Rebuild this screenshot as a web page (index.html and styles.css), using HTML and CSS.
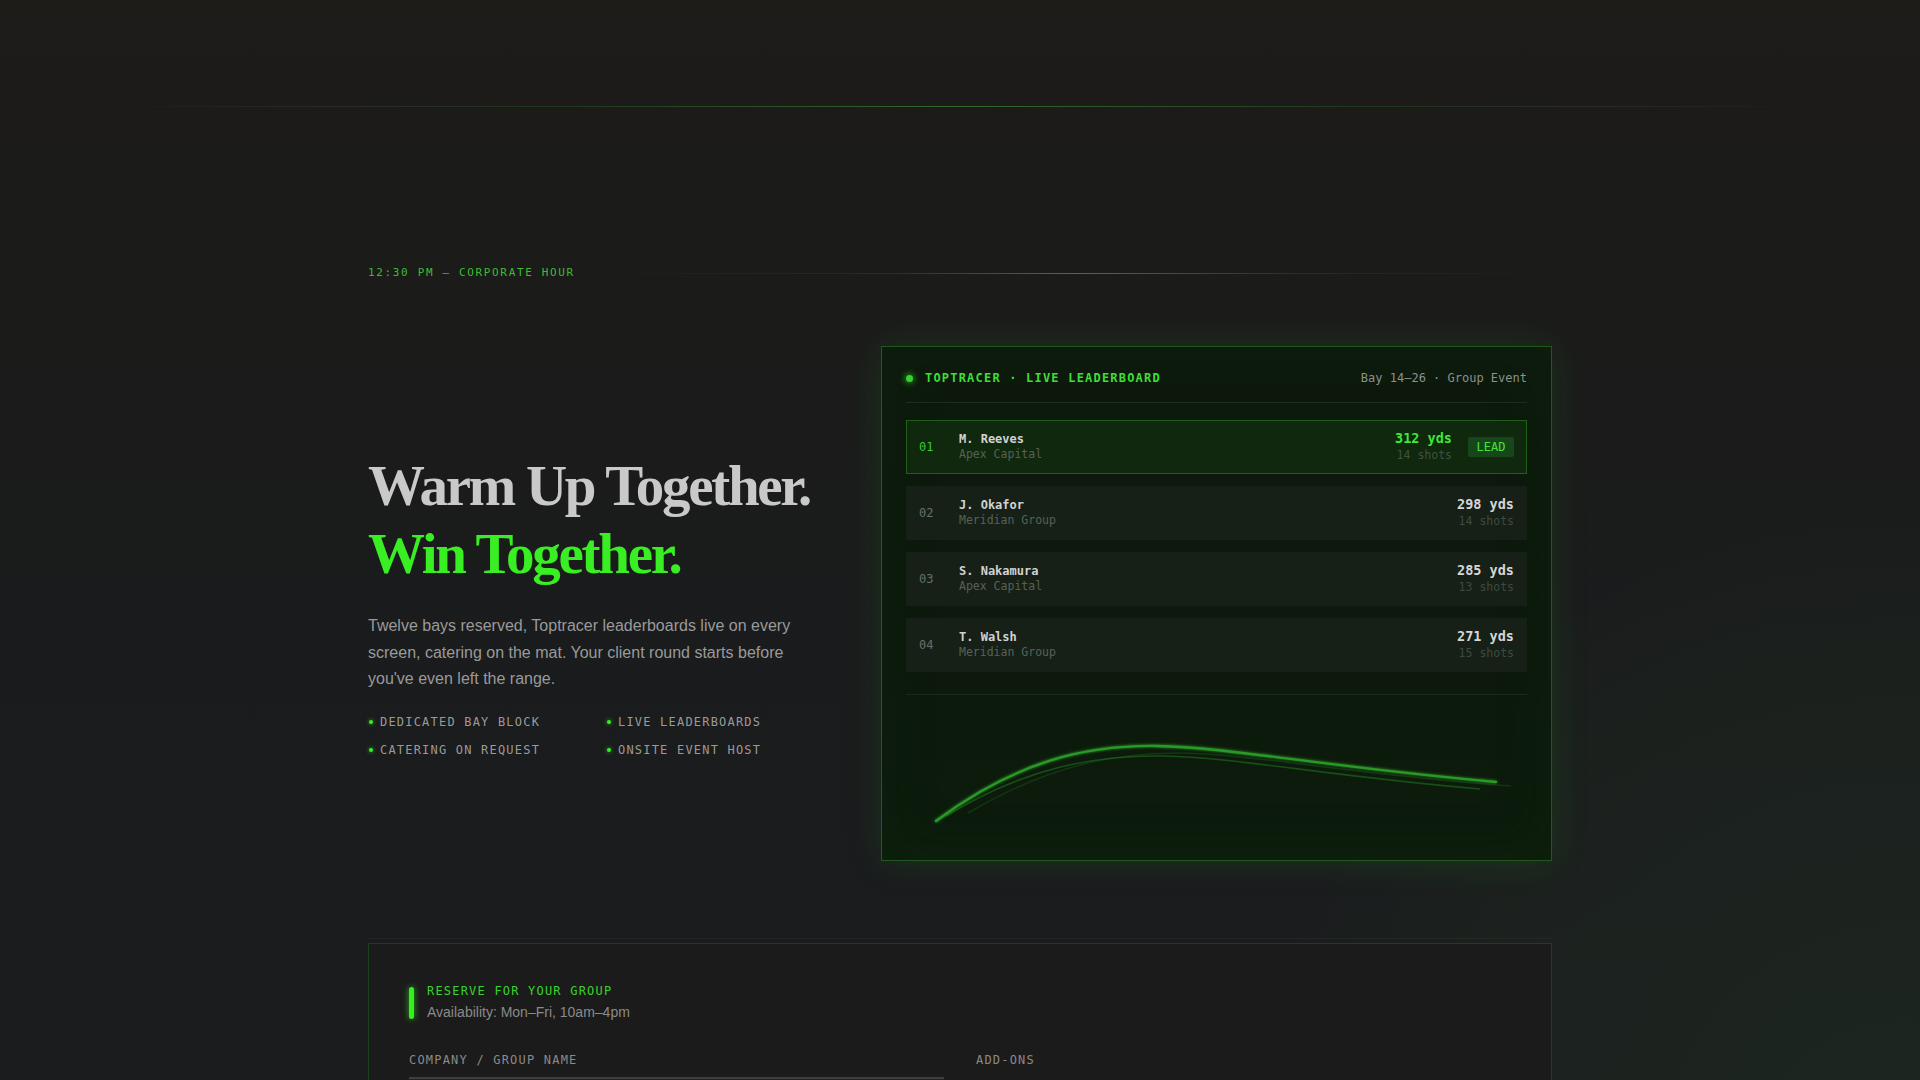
FILE: index.html
```html
<!DOCTYPE html>
<html lang="en">
<head>
<meta charset="utf-8">
<title>Corporate Hour — Toptracer</title>
<link rel="stylesheet" href="styles.css">
</head>
<body>
<header class="topbar"></header>

<main class="container">
  <section class="hero">
    <div class="eyebrow-row">
      <span class="eyebrow">12:30 PM — CORPORATE HOUR</span>
      <span class="eyebrow-line"></span>
    </div>

    <div class="hero-grid">
      <div class="hero-copy">
        <h1 class="title">
          <span class="title-line">Warm Up Together.</span>
          <span class="title-line accent">Win Together.</span>
        </h1>
        <p class="lead">Twelve bays reserved, Toptracer leaderboards live on every screen, catering on the mat. Your client round starts before you've even left the range.</p>
        <ul class="features">
          <li>DEDICATED BAY BLOCK</li>
          <li>LIVE LEADERBOARDS</li>
          <li>CATERING ON REQUEST</li>
          <li>ONSITE EVENT HOST</li>
        </ul>
      </div>

      <div class="board">
        <div class="board-head">
          <div class="board-title"><span class="live-dot"></span>TOPTRACER · LIVE LEADERBOARD</div>
          <div class="board-meta">Bay 14–26 · Group Event</div>
        </div>
        <ol class="rows">
          <li class="row lead-row">
            <span class="rank">01</span>
            <div class="who"><span class="name">M. Reeves</span><span class="co">Apex Capital</span></div>
            <div class="score"><span class="yds">312 yds</span><span class="shots">14 shots</span></div>
            <span class="badge">LEAD</span>
          </li>
          <li class="row">
            <span class="rank">02</span>
            <div class="who"><span class="name">J. Okafor</span><span class="co">Meridian Group</span></div>
            <div class="score"><span class="yds">298 yds</span><span class="shots">14 shots</span></div>
          </li>
          <li class="row">
            <span class="rank">03</span>
            <div class="who"><span class="name">S. Nakamura</span><span class="co">Apex Capital</span></div>
            <div class="score"><span class="yds">285 yds</span><span class="shots">13 shots</span></div>
          </li>
          <li class="row">
            <span class="rank">04</span>
            <div class="who"><span class="name">T. Walsh</span><span class="co">Meridian Group</span></div>
            <div class="score"><span class="yds">271 yds</span><span class="shots">15 shots</span></div>
          </li>
        </ol>
        <div class="chart">
          <svg viewBox="0 0 621 140" width="621" height="140" aria-hidden="true">
            <defs>
              <filter id="glow" x="-10%" y="-50%" width="120%" height="200%">
                <feGaussianBlur stdDeviation="1.4" result="b"/>
                <feMerge><feMergeNode in="b"/><feMergeNode in="SourceGraphic"/></feMerge>
              </filter>
            </defs>
            <path d="M62 118 C 140 72, 205 58, 272 58 S 450 80, 605 91" fill="none" stroke="#1f6a1f" stroke-width="1.5" opacity="0.35"/>
            <path d="M40 121 C 120 72, 190 60, 258 61 S 430 82, 574 94" fill="none" stroke="#1f7a1f" stroke-width="1.6" opacity="0.55"/>
            <path d="M30 126 C 110 66, 180 50, 251 51 S 420 72, 590 87" fill="none" stroke="#2a9a25" stroke-width="2.3" stroke-linecap="round" filter="url(#glow)"/>
          </svg>
        </div>
      </div>
    </div>
  </section>

  <section class="booking">
    <div class="book-card">
      <div class="book-head">
        <span class="book-bar"></span>
        <div>
          <div class="book-title">RESERVE FOR YOUR GROUP</div>
          <div class="book-sub">Availability: Mon–Fri, 10am–4pm</div>
        </div>
      </div>
      <div class="book-grid">
        <div class="field">
          <label class="field-label" for="company">COMPANY / GROUP NAME</label>
          <input id="company" class="input" type="text">
        </div>
        <div class="field">
          <span class="field-label">ADD-ONS</span>
        </div>
      </div>
    </div>
  </section>
</main>
</body>
</html>
```

FILE: styles.css
```css
* { box-sizing: border-box; }

html, body {
  margin: 0;
  padding: 0;
}

body {
  min-height: 1200px;
  background:
    radial-gradient(circle 640px at 1900px 1160px, rgba(45, 95, 45, 0.15) 0%, rgba(38, 80, 38, 0.10) 70%, rgba(30, 60, 30, 0.05) 97%, rgba(0, 0, 0, 0) 100%),
    linear-gradient(180deg, #1e1c19 0px, #1c1b1a 110px, #1b1b1b 400px, #1a1c1e 1000px);
  background-repeat: no-repeat;
  color: #c8c8c8;
  font-family: "Liberation Sans", Arial, sans-serif;
}

.topbar {
  height: 107px;
  position: relative;
}
.topbar::after {
  content: "";
  position: absolute;
  left: 0;
  right: 0;
  bottom: 0;
  height: 1px;
  background: linear-gradient(90deg, rgba(255,255,255,0) 6%, rgba(255,255,255,0.05) 14%, rgba(40,110,40,0.35) 30%, rgba(70,170,60,0.55) 50%, rgba(40,110,40,0.35) 70%, rgba(255,255,255,0.05) 86%, rgba(255,255,255,0) 94%);
}

.container {
  width: 1184px;
  margin: 0 auto;
}

.hero {
  padding-top: 159px;
}

.eyebrow-row {
  display: flex;
  align-items: center;
  gap: 20px;
  margin-bottom: 66px;
}
.eyebrow {
  font-family: "DejaVu Sans Mono", "Liberation Mono", monospace;
  font-size: 11px;
  letter-spacing: 0.15em;
  line-height: 14px;
  color: #3cbb34;
  white-space: nowrap;
}
.eyebrow-line {
  flex: 1;
  height: 1px;
  background: linear-gradient(90deg, rgba(60,200,60,0) 0%, rgba(60,200,60,0.12) 30%, rgba(70,210,60,0.55) 50%, rgba(60,200,60,0.12) 75%, rgba(60,200,60,0) 100%);
}

.hero-grid {
  display: grid;
  grid-template-columns: 1fr 671px;
  gap: 62px;
  align-items: center;
}

.hero-copy {
  padding-top: 4px;
}

.title {
  margin: 0;
  font-family: "Liberation Serif", "Times New Roman", serif;
  font-weight: 700;
  font-size: 57px;
  line-height: 1.2;
  letter-spacing: -0.04em;
  color: #c9c9c9;
}
.title-line { display: block; }
.title-line.accent { color: #39ef24; }

.lead {
  margin: 25px 0 0;
  font-size: 16px;
  line-height: 1.65;
  color: #999a9a;
  max-width: 440px;
}

.features {
  list-style: none;
  margin: 21px 0 0;
  padding: 0 0 0 1px;
  display: grid;
  grid-template-columns: 238px 1fr;
  row-gap: 10px;
}
.features li {
  display: flex;
  align-items: center;
  gap: 7px;
  font-family: "DejaVu Sans Mono", "Liberation Mono", monospace;
  font-size: 12px;
  line-height: 18px;
  letter-spacing: 0.1em;
  color: #9a9a9a;
}
.features li::before {
  content: "";
  width: 4px;
  height: 4px;
  border-radius: 50%;
  background: #39ef24;
  box-shadow: 0 0 4px rgba(57, 239, 36, 0.8);
  flex: none;
}

/* Leaderboard card */
.board {
  border: 1px solid #1f5a1c;
  background: linear-gradient(180deg, #0d190d 0%, #0c190c 60%, #0c1c0c 100%);
  box-shadow: 0 0 36px rgba(40, 190, 40, 0.14), inset 0 0 60px rgba(20, 60, 20, 0.15);
  padding: 23px 24px 25px;
  font-family: "DejaVu Sans Mono", "Liberation Mono", monospace;
}

.board-head {
  display: flex;
  align-items: center;
  justify-content: space-between;
  box-sizing: content-box;
  height: 16px;
  padding-bottom: 16px;
  border-bottom: 1px solid #1b2d1b;
}
.board-title {
  display: flex;
  align-items: center;
  gap: 12px;
  font-size: 12px;
  font-weight: 700;
  letter-spacing: 0.1em;
  color: #3ede36;
}
.live-dot {
  width: 7px;
  height: 7px;
  border-radius: 50%;
  background: #34d42c;
  box-shadow: 0 0 6px 1px rgba(52, 212, 44, 0.7);
}
.board-meta {
  font-size: 12px;
  color: #8b918b;
}

.rows {
  list-style: none;
  margin: 17px 0 0;
  padding: 0 0 22px;
  display: flex;
  flex-direction: column;
  gap: 12px;
  border-bottom: 1px solid #1a2a1a;
}
.row {
  display: flex;
  align-items: center;
  height: 54px;
  padding: 0 12px;
  border: 1px solid transparent;
  background: #172017;
}
.row.lead-row {
  background: #0f280e;
  border-color: #1f5e1b;
}
.rank {
  width: 28px;
  margin-right: 12px;
  font-size: 12px;
  color: #687068;
}
.lead-row .rank { color: #3cc634; }
.who {
  flex: 1;
  display: flex;
  flex-direction: column;
}
.name {
  font-size: 12px;
  line-height: 15px;
  font-weight: 700;
  color: #d2d2d2;
}
.co {
  font-size: 11.5px;
  line-height: 15px;
  color: #566256;
}
.score {
  display: flex;
  flex-direction: column;
  align-items: flex-end;
}
.yds {
  font-size: 13.5px;
  line-height: 17px;
  font-weight: 700;
  color: #d6d6d6;
}
.lead-row .yds { color: #3ee836; }
.shots {
  font-size: 11.5px;
  line-height: 17px;
  color: #3e4a3e;
}
.lead-row .shots { color: #3f513f; }
.badge {
  margin-left: 16px;
  width: 46px;
  height: 20px;
  display: flex;
  align-items: center;
  justify-content: center;
  background: #16461a;
  color: #46e23a;
  font-size: 12px;
  border-radius: 2px;
}

.chart {
  height: 140px;
}
.chart svg { display: block; }

/* Booking */
.booking {
  margin-top: 77px;
  border-top: 1px solid rgba(255, 255, 255, 0.035);
  padding-top: 4px;
}
.book-card {
  border: 1px solid #1e3f1c;
  background: #1b1b1b;
  padding: 39px 40px 40px;
}
.book-head {
  display: flex;
  align-items: center;
  gap: 13px;
}
.book-bar {
  width: 5px;
  height: 32px;
  border-radius: 3px;
  background: #35f01f;
  box-shadow: 0 0 6px rgba(53, 240, 31, 0.7);
  flex: none;
}
.book-title {
  font-family: "DejaVu Sans Mono", "Liberation Mono", monospace;
  font-size: 12px;
  line-height: 16px;
  letter-spacing: 0.1em;
  color: #3ad22e;
  margin-bottom: 2px;
}
.book-sub {
  font-size: 14px;
  line-height: 22px;
  color: #8a8a8a;
}
.book-grid {
  display: grid;
  grid-template-columns: 1fr 1fr;
  gap: 32px;
  margin-top: 30px;
}
.field {
  display: flex;
  flex-direction: column;
}
.field-label {
  font-family: "DejaVu Sans Mono", "Liberation Mono", monospace;
  font-size: 12px;
  line-height: 15px;
  letter-spacing: 0.1em;
  color: #8a8a8a;
  margin-bottom: 9px;
}
.input {
  height: 44px;
  border: none;
  border-top: 2px solid #3f3f3f;
  background: #222222;
  color: #ddd;
  font-size: 14px;
}
```
